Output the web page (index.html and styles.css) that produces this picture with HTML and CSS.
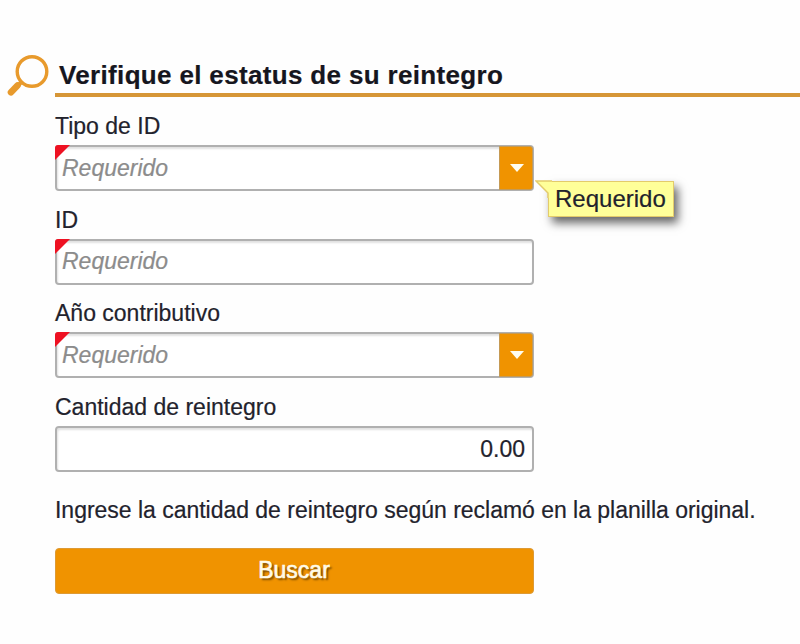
FILE: index.html
```html
<!DOCTYPE html>
<html lang="es">
<head>
    <meta charset="UTF-8">
    <title>Estatus de reintegro</title>
    <link rel="stylesheet" href="styles.css">
</head>
<body>
    <div class="page">
        <div class="header">
            <svg class="search-icon" width="52" height="46" viewBox="0 0 52 46">
                <circle cx="32" cy="17.5" r="14.8" fill="none" stroke="#e89a2c" stroke-width="3.4"/>
                <path d="M21.5 28 L17.5 32" fill="none" stroke="#e89a2c" stroke-width="4"/>
                <path d="M17.5 31.5 L11 38.3" fill="none" stroke="#e89a2c" stroke-width="6.6" stroke-linecap="round"/>
            </svg>
            <h1>Verifique el estatus de su reintegro</h1>
        </div>
        <form class="form">
            <div class="form-group">
                <label for="idType">Tipo de ID</label>
                <div class="field required">
                    <input type="text" id="idType" placeholder="Requerido">
                    <button type="button" class="dropdown" aria-label="Abrir"></button>
                    <div class="tooltip">
                        <svg class="tooltip-tail" width="17" height="18" viewBox="0 0 17 18">
                            <path d="M17 1 H1 L13 13 V18 H17 Z" fill="#ffff99"/>
                            <path d="M17 1 H1 L13 13 V18" fill="none" stroke="#e3cb6b" stroke-width="1.5"/>
                        </svg>
                        Requerido
                    </div>
                </div>
            </div>
            <div class="form-group">
                <label for="idNumber">ID</label>
                <div class="field required">
                    <input type="text" id="idNumber" placeholder="Requerido">
                </div>
            </div>
            <div class="form-group">
                <label for="taxYear">Año contributivo</label>
                <div class="field required">
                    <input type="text" id="taxYear" placeholder="Requerido">
                    <button type="button" class="dropdown" aria-label="Abrir"></button>
                </div>
            </div>
            <div class="form-group">
                <label for="amount">Cantidad de reintegro</label>
                <div class="field">
                    <input type="text" id="amount" class="amount" value="0.00">
                </div>
            </div>
            <p class="hint">Ingrese la cantidad de reintegro según reclamó en la planilla original.</p>
            <button type="button" class="submit">Buscar</button>
        </form>
    </div>
</body>
</html>
```

FILE: styles.css
```css
body {
    margin: 0;
    font-family: "Liberation Sans", Arial, sans-serif;
    font-size: 23px;
    color: #22222c;
    background-color: #fefefe;
    overflow: hidden;
    -webkit-text-stroke: 0.2px;
}
.page {
    padding-top: 54px;
}
.header {
    display: flex;
    align-items: flex-start;
}
.search-icon {
    flex: none;
    margin-right: 3px;
}
h1 {
    flex: 1;
    box-sizing: border-box;
    height: 43px;
    margin: 0;
    padding: 6px 0 0 4px;
    border-bottom: 4px solid #d69637;
    font-size: 26px;
    line-height: 30px;
    letter-spacing: 0.34px;
    color: #16161e;
    white-space: nowrap;
}
.form {
    padding: 10px 0 0 55px;
}
.form-group {
    height: 93.7px;
}
label {
    display: block;
    height: 35px;
    line-height: 32px;
}
.field {
    position: relative;
    display: flex;
    box-sizing: border-box;
    width: 479px;
    height: 46px;
    border: 2px solid #b0b0b0;
    border-radius: 4px;
    background-color: white;
    box-shadow: inset 1px 2px 2px rgba(0,0,0,0.12);
}
/* red corner on required fields */
.required::before {
    content: "";
    position: absolute;
    top: -2px;
    left: -2px;
    border-top: 15px solid #ee1122;
    border-right: 15px solid transparent;
    border-top-left-radius: 3px;
}
input {
    flex: 1;
    min-width: 0;
    padding: 0 7px 0 5px;
    border: none;
    outline: none;
    background: transparent;
    font: inherit;
    color: #22222c;
}
input::placeholder {
    color: #8c8c8c;
    font-style: italic;
    opacity: 1;
}
.amount {
    text-align: right;
}
.dropdown {
    display: flex;
    align-items: center;
    justify-content: center;
    width: 34px;
    margin: -1px -1px -1px 0;
    padding: 0 0 0 2px;
    border: 1px solid #c59a55;
    border-radius: 0 3px 3px 0;
    background-color: #f09300;
}
.dropdown::after {
    content: "";
    border-top: 8px solid #fffdf0;
    border-left: 7px solid transparent;
    border-right: 7px solid transparent;
}
.tooltip {
    position: absolute;
    top: 34px;
    left: 491px;
    box-sizing: border-box;
    width: 126px;
    height: 36px;
    padding-left: 6px;
    border: 1.5px solid #e3cb6b;
    background-color: #ffff99;
    box-shadow: 4px 6px 9px rgba(0,0,0,0.6);
    font-size: 24px;
    line-height: 33px;
    white-space: nowrap;
}
.tooltip-tail {
    position: absolute;
    top: -2px;
    left: -14px;
}
.hint {
    box-sizing: border-box;
    margin: 0;
    height: 63px;
    padding-top: 9px;
    line-height: 32px;
    letter-spacing: -0.02px;
    white-space: nowrap;
}
.submit {
    display: block;
    width: 479px;
    height: 46px;
    padding: 0 1px 0 0;
    border: 1px solid #dd9a35;
    border-radius: 4px;
    background-color: #f09300;
    color: #fffbe8;
    font: inherit;
    -webkit-text-stroke: 0.6px #fffbe8;
    text-shadow: 2px 2px 2px rgba(0,0,0,0.5);
}
```
